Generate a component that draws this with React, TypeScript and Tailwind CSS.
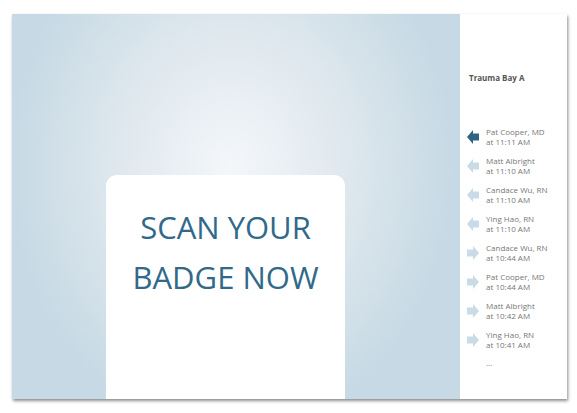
import React from "react";

type Entry = { name: string; time: string; dir: "in" | "out"; active?: boolean };

const entries: Entry[] = [
  { name: "Pat Cooper, MD", time: "at 11:11 AM", dir: "in", active: true },
  { name: "Matt Albright", time: "at 11:10 AM", dir: "in" },
  { name: "Candace Wu, RN", time: "at 11:10 AM", dir: "in" },
  { name: "Ying Hao, RN", time: "at 11:10 AM", dir: "in" },
  { name: "Candace Wu, RN", time: "at 10:44 AM", dir: "out" },
  { name: "Pat Cooper, MD", time: "at 10:44 AM", dir: "out" },
  { name: "Matt Albright", time: "at 10:42 AM", dir: "out" },
  { name: "Ying Hao, RN", time: "at 10:41 AM", dir: "out" },
];

function Arrow({ dir, active }: { dir: "in" | "out"; active?: boolean }) {
  const fill = active ? "#2f6583" : "#c9dbe6";
  const pts =
    dir === "in"
      ? "0,7 6,0 6,3.5 12,3.5 12,10.5 6,10.5 6,14"
      : "12,7 6,0 6,3.5 0,3.5 0,10.5 6,10.5 6,14";
  return (
    <svg width="12" height="14" viewBox="0 0 12 14" className="shrink-0">
      <polygon points={pts} fill={fill} />
    </svg>
  );
}

export default function App() {
  return (
    <div className="w-[577px] h-[413px] bg-white pl-[12px] pt-[14px] font-['Open_Sans',sans-serif]">
      <div className="w-[555px] h-[385px] flex shadow-[1px_2px_3px_rgba(0,0,0,0.45)]">
        <div className="flex-1 h-full flex flex-col pl-[94px] pt-[161px] bg-[radial-gradient(ellipse_50%_70%_at_49%_40%,#f4f7fa_0%,#dfe8ee_50%,#c6d9e4_100%)]">
          <div className="w-[239px] flex-1 bg-white rounded-t-[11px] pt-[27px] text-center text-[31px] leading-[50px] text-[#31698a]">
            <div>SCAN YOUR</div>
            <div>BADGE NOW</div>
          </div>
        </div>
        <div className="w-[107px] h-full bg-white pl-[7px] pt-[58px]">
          <div className="pl-[2px] text-[8px] leading-[12px] font-bold text-[#555]">Trauma Bay A</div>
          <div className="mt-[43px] flex flex-col gap-[9px]">
            {entries.map((e, i) => (
              <div key={i} className="flex items-center gap-[7px]">
                <Arrow dir={e.dir} active={e.active} />
                <div className="text-[8px] leading-[10px] text-[#777]">
                  <div>{e.name}</div>
                  <div>{e.time}</div>
                </div>
              </div>
            ))}
          </div>
          <div className="pl-[19px] mt-[8px] text-[8px] leading-[10px] text-[#777]">...</div>
        </div>
      </div>
    </div>
  );
}
